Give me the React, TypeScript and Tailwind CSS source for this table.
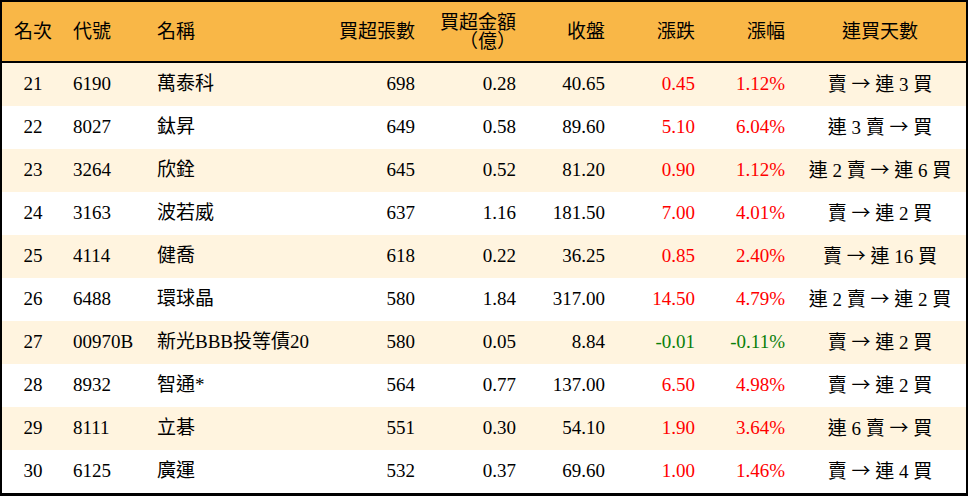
const rows = [
  { rank: 21, code: '6190', name: '萬泰科', qty: '698', amt: '0.28', close: '40.65', chg: '0.45', pct: '1.12%', days: '賣 → 連 3 買' },
  { rank: 22, code: '8027', name: '鈦昇', qty: '649', amt: '0.58', close: '89.60', chg: '5.10', pct: '6.04%', days: '連 3 賣 → 買' },
  { rank: 23, code: '3264', name: '欣銓', qty: '645', amt: '0.52', close: '81.20', chg: '0.90', pct: '1.12%', days: '連 2 賣 → 連 6 買' },
  { rank: 24, code: '3163', name: '波若威', qty: '637', amt: '1.16', close: '181.50', chg: '7.00', pct: '4.01%', days: '賣 → 連 2 買' },
  { rank: 25, code: '4114', name: '健喬', qty: '618', amt: '0.22', close: '36.25', chg: '0.85', pct: '2.40%', days: '賣 → 連 16 買' },
  { rank: 26, code: '6488', name: '環球晶', qty: '580', amt: '1.84', close: '317.00', chg: '14.50', pct: '4.79%', days: '連 2 賣 → 連 2 買' },
  { rank: 27, code: '00970B', name: '新光BBB投等債20', qty: '580', amt: '0.05', close: '8.84', chg: '-0.01', pct: '-0.11%', days: '賣 → 連 2 買' },
  { rank: 28, code: '8932', name: '智通*', qty: '564', amt: '0.77', close: '137.00', chg: '6.50', pct: '4.98%', days: '賣 → 連 2 買' },
  { rank: 29, code: '8111', name: '立碁', qty: '551', amt: '0.30', close: '54.10', chg: '1.90', pct: '3.64%', days: '連 6 賣 → 買' },
  { rank: 30, code: '6125', name: '廣運', qty: '532', amt: '0.37', close: '69.60', chg: '1.00', pct: '1.46%', days: '賣 → 連 4 買' },
]

const grid = 'grid grid-cols-[62px_84px_182px_94px_101px_89px_90px_90px_172px] items-center'

// the arrow is drawn with the CJK font so it gets a full-width glyph
function Days({ text }: { text: string }) {
  const [a, b] = text.split('→')
  return (
    <>
      {a}
      <span style={{ fontFamily: '"Noto Sans CJK TC", sans-serif' }}>→</span>
      {b}
    </>
  )
}

export default function App() {
  return (
    <div
      className="w-[968px] h-[496px] bg-white text-black text-[19px] border-t-2 border-x-2 border-b-[3px] border-black"
      style={{ fontFamily: '"Liberation Serif", "Noto Sans CJK TC", serif' }}
    >
      {/* Header */}
      <div className={`${grid} h-[61px] bg-[#f9b747] border-b-2 border-black leading-[19px]`}>
        <div className="text-center">名次</div>
        <div className="pl-[9px]">代號</div>
        <div className="pl-[9px]">名稱</div>
        <div className="text-right pr-[9px]">買超張數</div>
        <div className="text-right pr-[9px]">買超金額<br />（億）</div>
        <div className="text-right pr-[9px]">收盤</div>
        <div className="text-right pr-[9px]">漲跌</div>
        <div className="text-right pr-[9px]">漲幅</div>
        <div className="text-center">連買天數</div>
      </div>

      {/* Rows */}
      {rows.map((r, i) => {
        const up = !r.chg.startsWith('-')
        const color = up ? 'text-[#ff0000]' : 'text-[#0a7f0a]'
        return (
          <div key={r.rank} className={`${grid} h-[43px] ${i % 2 === 0 ? 'bg-[#fff4df]' : 'bg-white'}`}>
            <div className="text-center">{r.rank}</div>
            <div className="pl-[9px]">{r.code}</div>
            <div className="pl-[9px] whitespace-nowrap">{r.name}</div>
            <div className="text-right pr-[9px]">{r.qty}</div>
            <div className="text-right pr-[9px]">{r.amt}</div>
            <div className="text-right pr-[9px]">{r.close}</div>
            <div className={`text-right pr-[9px] ${color}`}>{r.chg}</div>
            <div className={`text-right pr-[9px] ${color}`}>{r.pct}</div>
            <div className="text-center whitespace-pre"><Days text={r.days} /></div>
          </div>
        )
      })}
    </div>
  )
}
